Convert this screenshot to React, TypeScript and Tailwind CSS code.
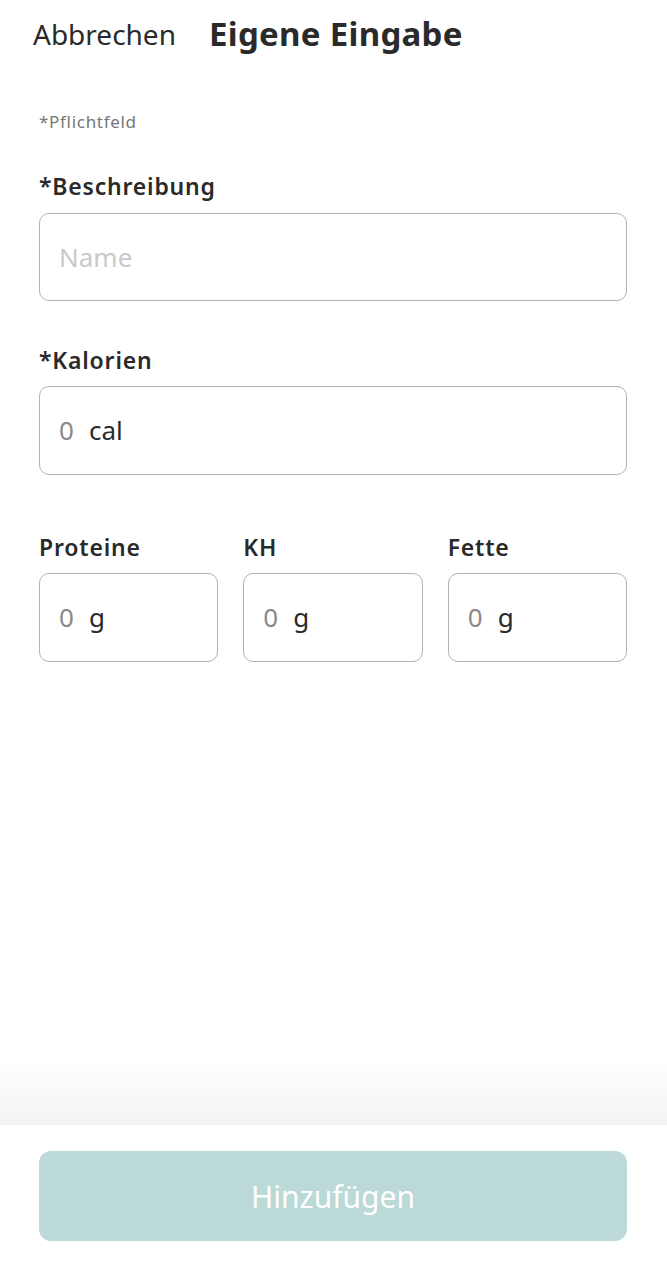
import React, { useState } from 'react';

const font = { fontFamily: '"Noto Sans", "Open Sans", Arial, sans-serif' };

interface UnitFieldProps {
  label: string;
  unit: string;
  value: string;
  onChange: (v: string) => void;
}

const UnitField: React.FC<UnitFieldProps> = ({ label, unit, value, onChange }) => (
  <div className="flex flex-col">
    <label className="text-[23px] leading-[28px] font-semibold tracking-[0.8px] text-[#2a2a2a]">{label}</label>
    <div className="mt-[12px] h-[89px] rounded-[10px] border-[1.5px] border-[#b3b3b3] flex items-center pl-[19px]">
      <input
        value={value}
        onChange={(e) => onChange(e.target.value)}
        placeholder="0"
        inputMode="decimal"
        className="w-[17px] text-[26px] text-[#2a2a2a] placeholder:text-[#8a8a8a] outline-none bg-transparent"
        style={font}
      />
      <span className="ml-[13px] text-[26px] text-[#2a2a2a]">{unit}</span>
    </div>
  </div>
);

export default function App() {
  const [name, setName] = useState('');
  const [cal, setCal] = useState('');
  const [protein, setProtein] = useState('');
  const [carbs, setCarbs] = useState('');
  const [fat, setFat] = useState('');

  const canSubmit = name.trim() !== '' && cal !== '';

  return (
    <div className="h-[1280px] w-full bg-white flex flex-col" style={font}>
      <header className="h-[68px] flex items-center pl-[33px]">
        <button className="text-[28px] text-[#2a2a2a]">Abbrechen</button>
        <h1 className="ml-[33px] text-[33px] tracking-[0.3px] font-bold text-[#2a2a2a]">Eigene Eingabe</h1>
      </header>

      <main className="flex-1 pl-[39px] pr-[40px]">
        <p className="mt-[44px] text-[17px] leading-[20px] tracking-[0.7px] text-[#777]">*Pflichtfeld</p>

        <div className="mt-[40px] flex flex-col">
          <label className="text-[23px] leading-[28px] font-semibold tracking-[0.8px] text-[#2a2a2a]">*Beschreibung</label>
          <div className="mt-[13px] h-[88px] rounded-[10px] border-[1.5px] border-[#b3b3b3] flex items-center px-[19px]">
            <input
              value={name}
              onChange={(e) => setName(e.target.value)}
              placeholder="Name"
              className="w-full text-[26px] text-[#2a2a2a] placeholder:text-[#c9c9c9] outline-none bg-transparent"
              style={font}
            />
          </div>
        </div>

        <div className="mt-[45px]">
          <UnitField label="*Kalorien" unit="cal" value={cal} onChange={setCal} />
        </div>

        <div className="mt-[58px] grid grid-cols-3 gap-x-[25px]">
          <UnitField label="Proteine" unit="g" value={protein} onChange={setProtein} />
          <UnitField label="KH" unit="g" value={carbs} onChange={setCarbs} />
          <UnitField label="Fette" unit="g" value={fat} onChange={setFat} />
        </div>
      </main>

      <div className="h-[65px] bg-gradient-to-b from-white to-[#f3f3f3]" />
      <footer className="h-[155px] bg-white pl-[39px] pr-[40px] pt-[26px]">
        <button
          disabled={!canSubmit}
          className={`w-full h-[90px] rounded-[12px] text-[30px] text-white ${canSubmit ? 'bg-[#5fa9a4]' : 'bg-[#bbd9d7]'}`}
        >
          Hinzufügen
        </button>
      </footer>
    </div>
  );
}
